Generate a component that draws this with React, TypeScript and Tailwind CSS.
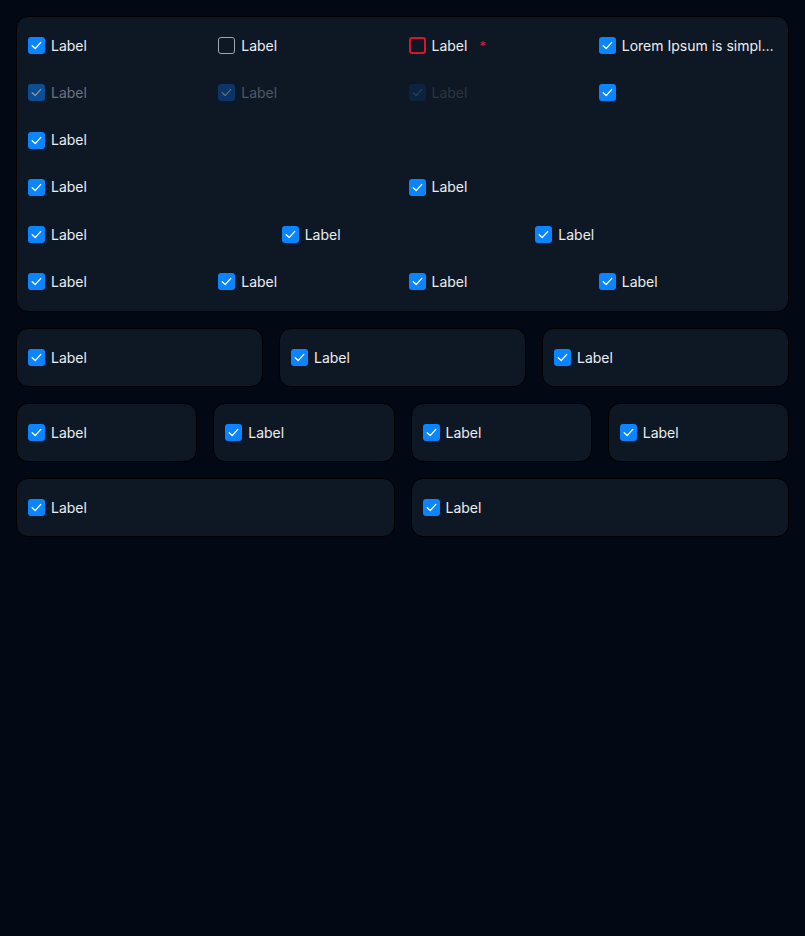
import React from "react";

type BoxProps = {
  checked?: boolean;
  tone?: "normal" | "error" | "dis1" | "dis2" | "dis3";
  label?: string;
  required?: boolean;
  truncate?: boolean;
};

function Check({ color }: { color: string }) {
  return (
    <svg viewBox="0 0 17 17" className="h-[17px] w-[17px]">
      <path d="M4.2 8.8 L7.2 11.6 L12.8 5.4" fill="none" stroke={color} strokeWidth="1.3" strokeLinecap="round" strokeLinejoin="round" />
    </svg>
  );
}

function Checkbox({ checked = true, tone = "normal", label, required, truncate }: BoxProps) {
  let box = "bg-[#0a84ff]";
  let mark = "#ffffff";
  let text = "text-[#eceef2]";
  if (tone === "dis1") {
    box = "bg-[#0b4e93]";
    mark = "#8a96a6";
    text = "text-[#6b7482]";
  } else if (tone === "dis2") {
    box = "bg-[#0a3566]";
    mark = "#5d6b7e";
    text = "text-[#4f5866]";
  } else if (tone === "dis3") {
    box = "bg-[#0c2340]";
    mark = "#2f3e52";
    text = "text-[#2b3441]";
  }
  if (!checked) {
    box = tone === "error" ? "border-2 border-[#d3182b]" : "border-[1.5px] border-[#a3a7ae]";
  }
  return (
    <div className="flex h-[35px] min-w-0 items-center gap-[6px]">
      <span className={`flex h-[17px] w-[17px] shrink-0 items-center justify-center rounded-[3px] ${box}`}>
        {checked && <Check color={mark} />}
      </span>
      {label && (
        <span className={`text-[14px] leading-5 ${text} ${truncate ? "truncate" : ""}`}>{label}</span>
      )}
      {required && <span className="ml-[6px] text-[13px] leading-5 text-[#e5193a]">*</span>}
    </div>
  );
}

function Card({ children }: { children: React.ReactNode }) {
  return (
    <div className="rounded-[12px] border border-black bg-[#0e1724] px-[11px] py-[11px]">{children}</div>
  );
}

export default function App() {
  return (
    <div
      className="flex min-h-[936px] flex-col gap-4 bg-[#030914] p-4"
      style={{ fontFamily: "Inter, 'Noto Sans', sans-serif" }}
    >
      <div className="rounded-[12px] border border-black bg-[#0e1724] px-[11px] pt-[11px] pb-[12px]">
        <div className="flex flex-col gap-[12.25px]">
          <div className="grid grid-cols-4 gap-3">
            <Checkbox label="Label" />
            <Checkbox label="Label" checked={false} />
            <Checkbox label="Label" checked={false} tone="error" required />
            <Checkbox label="Lorem Ipsum is simply dummy text" truncate />
          </div>
          <div className="grid grid-cols-4 gap-3">
            <Checkbox label="Label" tone="dis1" />
            <Checkbox label="Label" tone="dis2" />
            <Checkbox label="Label" tone="dis3" />
            <Checkbox />
          </div>
          <div className="grid grid-cols-1 gap-3">
            <Checkbox label="Label" />
          </div>
          <div className="grid grid-cols-2 gap-3">
            <Checkbox label="Label" />
            <Checkbox label="Label" />
          </div>
          <div className="grid grid-cols-3 gap-3">
            <Checkbox label="Label" />
            <Checkbox label="Label" />
            <Checkbox label="Label" />
          </div>
          <div className="grid grid-cols-4 gap-3">
            <Checkbox label="Label" />
            <Checkbox label="Label" />
            <Checkbox label="Label" />
            <Checkbox label="Label" />
          </div>
        </div>
      </div>

      <div className="grid grid-cols-3 gap-4">
        {[0, 1, 2].map((i) => (
          <Card key={i}>
            <Checkbox label="Label" />
          </Card>
        ))}
      </div>

      <div className="grid grid-cols-4 gap-4">
        {[0, 1, 2, 3].map((i) => (
          <Card key={i}>
            <Checkbox label="Label" />
          </Card>
        ))}
      </div>

      <div className="grid grid-cols-2 gap-4">
        {[0, 1].map((i) => (
          <Card key={i}>
            <Checkbox label="Label" />
          </Card>
        ))}
      </div>
    </div>
  );
}
